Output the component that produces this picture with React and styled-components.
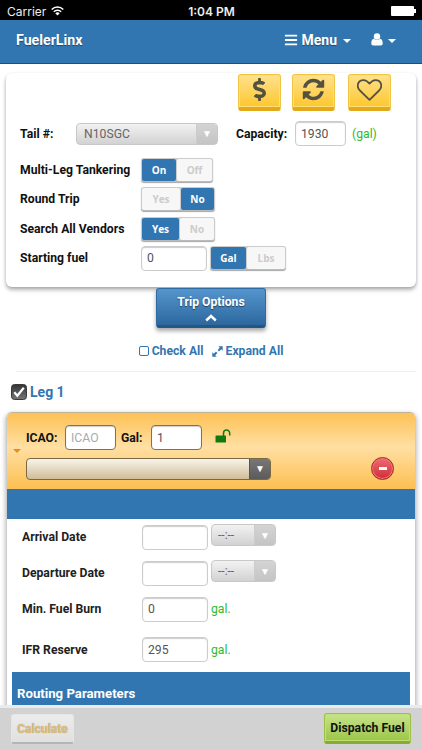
import styled, { createGlobalStyle, css } from "styled-components"
import { FaBars, FaDollarSign } from "react-icons/fa"

const App = () => {
  return (
    <Page>
      <GlobalStyle />
      <StatusBar>
        <Carrier>
          Carrier
          <WifiIcon />
        </Carrier>
        <Clock>1:04 PM</Clock>
        <Battery />
      </StatusBar>

      <NavBar>
        <Brand>FuelerLinx</Brand>
        <NavLinks>
          <MenuLink><FaBars size={14} />Menu<Caret /></MenuLink>
          <UserLink><UserIcon /><Caret /></UserLink>
        </NavLinks>
      </NavBar>

      <Content>
        <TripPanel>
          <ActionButtons>
            <YellowButton><FaDollarSign size={23} /></YellowButton>
            <YellowButton><RefreshIcon /></YellowButton>
            <YellowButton $last><HeartIcon /></YellowButton>
          </ActionButtons>

          <TailRow>
            <TailLabel>Tail #:</TailLabel>
            <Select $width={142} $height={22}>
              <SelectText>N10SGC</SelectText>
              <SelectArrow>▼</SelectArrow>
            </Select>
            <CapacityLabel>Capacity:</CapacityLabel>
            <Input $width={51} defaultValue="1930" />
            <Unit $gap={6}>(gal)</Unit>
          </TailRow>

          <OptionRow>
            <OptionLabel>Multi-Leg Tankering</OptionLabel>
            <Toggle>
              <ToggleItem $width={34} $active>On</ToggleItem>
              <ToggleItem $width={35}>Off</ToggleItem>
            </Toggle>
          </OptionRow>
          <OptionRow>
            <OptionLabel>Round Trip</OptionLabel>
            <Toggle>
              <ToggleItem $width={38}>Yes</ToggleItem>
              <ToggleItem $width={33} $active>No</ToggleItem>
            </Toggle>
          </OptionRow>
          <OptionRow>
            <OptionLabel>Search All Vendors</OptionLabel>
            <Toggle>
              <ToggleItem $width={37} $active>Yes</ToggleItem>
              <ToggleItem $width={34}>No</ToggleItem>
            </Toggle>
          </OptionRow>
          <OptionRow>
            <OptionLabel>Starting fuel</OptionLabel>
            <Input $width={66} defaultValue="0" />
            <Toggle $gap={3}>
              <ToggleItem $width={35} $active>Gal</ToggleItem>
              <ToggleItem $width={38}>Lbs</ToggleItem>
            </Toggle>
          </OptionRow>
        </TripPanel>

        <TripOptions>
          Trip Options
          <ChevronUp />
        </TripOptions>

        <Links>
          <LinkItem><EmptyBox />Check All</LinkItem>
          <LinkItem><ExpandIcon />Expand All</LinkItem>
        </Links>
        <Divider />

        <LegTitle>
          <CheckedBox />
          Leg 1
        </LegTitle>

        <LegPanel>
          <LegHeader>
            <LegCaret />
            <LegFields>
              <IcaoRow>
                <IcaoLabel>ICAO:</IcaoLabel>
                <Input $width={51} $dark placeholder="ICAO" />
                <GalLabel>Gal:</GalLabel>
                <Input $width={51} $dark defaultValue="1" />
                <UnlockIcon />
              </IcaoRow>
              <VendorRow>
                <VendorSelect>
                  <VendorArrow>▼</VendorArrow>
                </VendorSelect>
                <RemoveButton><Minus /></RemoveButton>
              </VendorRow>
            </LegFields>
          </LegHeader>
          <BlueBar />

          <LegRow $height={36}>
            <LegLabel>Arrival Date</LegLabel>
            <Input $width={66} />
            <TimeSelect />
          </LegRow>
          <LegRow $height={36}>
            <LegLabel>Departure Date</LegLabel>
            <Input $width={66} />
            <TimeSelect />
          </LegRow>
          <LegRow $height={36}>
            <LegLabel>Min. Fuel Burn</LegLabel>
            <Input $width={66} defaultValue="0" />
            <Unit $gap={3}>gal.</Unit>
          </LegRow>
          <LegRow $height={45}>
            <LegLabel>IFR Reserve</LegLabel>
            <Input $width={66} defaultValue="295" />
            <Unit $gap={3}>gal.</Unit>
          </LegRow>
          <RoutingBar>Routing Parameters</RoutingBar>
        </LegPanel>
      </Content>

      <Footer>
        <CalculateButton>Calculate</CalculateButton>
        <DispatchButton>Dispatch Fuel</DispatchButton>
      </Footer>
    </Page>
  )
}

export default App

const TimeSelect = () => (
  <TimeBox $width={65} $height={22}>
    <TimeText>--:--</TimeText>
    <SelectArrow>▼</SelectArrow>
  </TimeBox>
)

const WifiIcon = () => (
  <svg width="13" height="10" viewBox="0 0 13 10" fill="none" stroke="#fff" strokeWidth="1.5">
    <path d="M0.7 3.5a8.2 8.2 0 0 1 11.6 0" />
    <path d="M2.8 5.7a5.2 5.2 0 0 1 7.4 0" />
    <path d="M6.5 9.6L4.3 7.3a3.1 3.1 0 0 1 4.400 0z" fill="#fff" stroke="none" />
  </svg>
)

const UserIcon = () => (
  <svg width="12" height="13" viewBox="0 0 12 13" fill="currentColor">
    <circle cx="6" cy="3.500" r="3.200" />
    <path d="M3 5.800C1 6.200 0.300 8 0.300 10.300c0 1.400 0.800 2.200 2.100 2.200h7.200c1.300 0 2.100-0.800 2.100-2.200C11.700 8 11 6.200 9 5.800 7.500 7.500 4.500 7.500 3 5.800z" />
  </svg>
)

const RefreshIcon = () => (
  <svg width="25" height="25" viewBox="-128 0 1792 1792" fill="currentColor">
    <path d="M1511 1056q0 5-1 7-64 268-268 434.500t-478 166.500q-146 0-282.500-55t-243.500-157l-129 129q-19 19-45 19t-45-19-19-45v-448q0-26 19-45t45-19h448q26 0 45 19t19 45-19 45l-137 137q71 66 161 102t187 36q134 0 250-65t186-179q11-17 53-117 8-23 30-23h192q13 0 22.500 9.500t9.500 22.500zm25-800v448q0 26-19 45t-45 19h-448q-26 0-45-19t-19-45 19-45l138-138q-148-137-349-137-134 0-250 65t-186 179q-11 17-53 117-8 23-30 23h-199q-13 0-22.500-9.500t-9.500-22.500v-7q65-268 270-434.500t480-166.500q146 0 284 55.500t245 156.500l130-129q19-19 45-19t45 19 19 45z" />
  </svg>
)

const HeartIcon = () => (
  <svg width="25" height="22" viewBox="0 0 25 22" fill="none" stroke="currentColor" strokeWidth="1.8" strokeLinejoin="round">
    <path d="M12.500 20.800L2.900 11.500C-1.200 7 1 1.100 6.500 1.100c2.700 0 4.500 1.700 6 3.500 1.500-1.800 3.300-3.500 6-3.500 5.500 0 7.700 5.900 3.600 10.400z" />
  </svg>
)

const ChevronUp = () => (
  <svg width="12" height="8" viewBox="0 0 12 8" fill="none" stroke="#fff" strokeWidth="2.400">
    <path d="M1.200 6.500L6 2l4.800 4.500" />
  </svg>
)

const EmptyBox = () => (
  <svg width="10" height="10" viewBox="0 0 10 10" fill="none" stroke="currentColor">
    <rect x="0.500" y="0.500" width="9" height="9" rx="1.500" />
  </svg>
)

const ExpandIcon = () => (
  <svg width="11" height="11" viewBox="0 0 11 11" fill="currentColor">
    <path d="M6.300 0.300H10.700V4.700L9.200 3.200L7 5.400L5.600 4L7.800 1.800zM4.700 10.700H0.300V6.300L1.800 7.800L4 5.600L5.400 7L3.200 9.200z" />
  </svg>
)

const CheckedBox = () => (
  <svg width="16" height="16" viewBox="0 0 16 16">
    <defs>
      <linearGradient id="box" x1="0" y1="0" x2="0" y2="1">
        <stop offset="0" stopColor="#333" />
        <stop offset="1" stopColor="#777" />
      </linearGradient>
    </defs>
    <rect x="0.500" y="0.500" width="15" height="15" rx="3" fill="url(#box)" stroke="#3a3a3a" />
    <path d="M3.300 8.300L6.300 11.700L12.800 3.700" fill="none" stroke="#fff" strokeWidth="2.200" />
  </svg>
)

const UnlockIcon = () => (
  <Unlock width="16" height="14" viewBox="0 0 16 14">
    <rect x="0.500" y="6.500" width="10.500" height="7" rx="0.600" fill="#107a10" />
    <path d="M8.500 7V4.200a3.100 3.100 0 0 1 6.200 0V6.600" fill="none" stroke="#107a10" strokeWidth="1.500" />
  </Unlock>
)

const GlobalStyle = createGlobalStyle`
  * { box-sizing: border-box; }
  body { margin: 0; background: #fff; }
  input, button { font-family: Roboto, sans-serif; }
`

const Page = styled.div`
  display: flex;
  flex-direction: column;
  width: 422px;
  height: 750px;
  overflow: hidden;
  font: 700 12.200px Roboto, sans-serif;
  color: #111;
`

const StatusBar = styled.div`
  display: grid;
  grid-template-columns: 1fr auto 1fr;
  align-items: center;
  flex: none;
  height: 20px;
  padding: 2px 6px 0 7px;
  background: #000;
  color: #eee;
`
const Carrier = styled.div`
  display: flex;
  align-items: center;
  gap: 5px;
  font: 400 12px Inter, sans-serif;
`
const Clock = styled.div`
  font: 600 12px Inter, sans-serif;
`
const Battery = styled.div`
  position: relative;
  justify-self: end;
  width: 23px;
  height: 10px;
  margin-right: 2px;
  border-radius: 1px;
  background: #fff;

  &::after {
    content: "";
    position: absolute;
    right: -2px;
    top: 3px;
    width: 2px;
    height: 4px;
    background: #fff;
  }
`

const NavBar = styled.div`
  display: flex;
  justify-content: space-between;
  align-items: center;
  flex: none;
  height: 44px;
  padding: 0 26px 4px 16px;
  background: #3276b1;
  border-bottom: 1px solid #204d74;
  color: #fff;
  text-shadow: 0 1px 1px rgba(0, 0, 0, 0.4);
`
const Brand = styled.div`
  font-size: 14.200px;
`
const NavLinks = styled.div`
  display: flex;
  align-items: center;
  gap: 20px;
`
const MenuLink = styled.div`
  display: flex;
  align-items: center;
  gap: 3px;
  font-size: 14px;
`
const UserLink = styled(MenuLink)`
  gap: 2px;
`
const Caret = styled.span`
  margin: 3px 0 0 3px;
  border: 4px solid transparent;
  border-top-color: #fff;
  border-bottom: 0;
`

const Content = styled.div`
  flex: 1;
  min-height: 0;
  overflow: hidden;
  padding: 9px 6px 0;
`

const TripPanel = styled.div`
  height: 214px;
  padding: 1px 0 0 14px;
  border-radius: 6px;
  box-shadow: 0 3px 4px rgba(0, 0, 0, 0.28), 0 1px 3px rgba(0, 0, 0, 0.12);
`
const ActionButtons = styled.div`
  display: flex;
  justify-content: flex-end;
  gap: 11px;
  height: 37px;
  margin: 0 25px 1px 0;
`
const YellowButton = styled.button`
  display: flex;
  justify-content: center;
  align-items: center;
  width: 43px;
  height: 37px;
  margin-left: ${(props) => (props.$last ? "2px" : 0)};
  padding: 0 0 3px;
  border: 1px solid #f0c440;
  border-bottom: 4px solid #e3a91b;
  border-radius: 3px;
  background: linear-gradient(#ffe18e, #fdc72e);
  box-shadow: inset 0 0 0 1px #ffdf79;
  color: #55513f;
`

const Row = styled.div`
  display: flex;
  align-items: center;
`
const TailRow = styled(Row)`
  height: 43px;
`
const OptionRow = styled(Row)`
  height: 29.500px;
`
const TailLabel = styled.div`
  width: 56px;
`
const CapacityLabel = styled.div`
  width: 77px;
  padding-left: 18px;
  white-space: nowrap;
`
const OptionLabel = styled.div`
  width: 121px;
  white-space: nowrap;
`

const Input = styled.input`
  width: ${(props) => props.$width}px;
  height: 25px;
  padding: 0 5px;
  border: 1px solid ${(props) => (props.$dark ? "#85714f" : "#ccc")};
  border-radius: 4px;
  outline: 0;
  background: #fff;
  box-shadow: inset 0 1px 1px rgba(0, 0, 0, 0.2);
  color: #555;
  font-size: 12.200px;

  &::placeholder {
    color: #aaa;
  }
`
const Unit = styled.div`
  margin-left: ${(props) => props.$gap}px;
  color: #2fba2f;
  font-weight: 400;
  font-size: 12.200px;
`

const Select = styled.div`
  display: flex;
  align-items: stretch;
  width: ${(props) => props.$width}px;
  height: ${(props) => props.$height}px;
  border: 1px solid #c8c8c8;
  border-radius: 4px;
  overflow: hidden;
  background: linear-gradient(#f2f2f2, #d2d2d2);
  color: #666;
  font-weight: 400;
`
const SelectText = styled.div`
  display: flex;
  align-items: center;
  flex: 1;
  padding-left: 7px;
  font-size: 12.200px;
`
const SelectArrow = styled.div`
  display: flex;
  justify-content: center;
  align-items: center;
  width: 21px;
  border-left: 1px solid #ccc;
  background: linear-gradient(#d4d4d4, #c4c4c4);
  color: #fff;
  font-size: 10px;
`
const TimeBox = styled(Select)`
  margin: 0 0 4px 3px;
`
const TimeText = styled(SelectText)`
  padding-left: 6px;
  font-size: 12px;
`

const Toggle = styled.div`
  display: flex;
  gap: 1px;
  height: 24px;
  margin-left: ${(props) => props.$gap || 0}px;
  border: 1px solid #ccc;
  border-bottom-color: #bbb;
  border-radius: 3px;
  background: #ccc;
  box-shadow: 0 1px 1px rgba(0, 0, 0, 0.35);
`
const ToggleItem = styled.div`
  display: flex;
  justify-content: center;
  align-items: center;
  width: ${(props) => props.$width}px;
  border-radius: 2px;
  background: #f7f7f7;
  color: #ccc;
  font: 700 10px "Open Sans", sans-serif;

  ${(props) => props.$active && css`
    background: #3276b1;
    color: #fff;
  `}
`

const TripOptions = styled.div`
  position: relative;
  display: flex;
  flex-direction: column;
  align-items: center;
  gap: 5px;
  width: 110px;
  height: 40px;
  margin: 1px auto 0;
  padding-top: 7px;
  border: 1px solid #2d6ca2;
  border-bottom: 3px solid #245682;
  border-radius: 3px;
  background: linear-gradient(#5594cd, #2c689e);
  box-shadow: 0 3px 4px rgba(0, 0, 0, 0.35);
  color: #fff;
  line-height: 13px;
  text-shadow: 0 1px 1px rgba(0, 0, 0, 0.5);
`
const Links = styled.div`
  display: flex;
  justify-content: center;
  gap: 8px;
  height: 43px;
  padding-top: 3px;
  color: #3276b1;
`
const LinkItem = styled(Row)`
  gap: 3px;
`
const Divider = styled.div`
  height: 1px;
  margin: 0 0 0 10px;
  background: #eee;
`
const LegTitle = styled(Row)`
  gap: 3px;
  height: 40px;
  padding-left: 5px;
  color: #3276b1;
  font-size: 14px;
`

const LegPanel = styled.div`
  height: 400px;
  border: 1px solid #c9b48d;
  border-color: #c0b49c #ccc;
  border-radius: 6px 6px 0 0;
  overflow: hidden;
  box-shadow: 0 2px 4px 1px rgba(0, 0, 0, 0.25);
`
const LegHeader = styled.div`
  display: flex;
  height: 76px;
  background: linear-gradient(#fdc155, #ffdfa3 45%, #fdbf50);
`
const LegCaret = styled.div`
  width: 8px;
  height: 4px;
  margin: 36px 4px 0 6px;
  border: 4px solid transparent;
  border-top-color: #f08c14;
  border-bottom: 0;
`
const LegFields = styled.div`
  flex: 1;
  padding-left: 1px;
`
const IcaoRow = styled(Row)`
  height: 49px;
`
const IcaoLabel = styled.div`
  width: 39px;
`
const GalLabel = styled.div`
  width: 35px;
  padding-left: 5px;
`
const Unlock = styled.svg`
  margin: 0 0 3px 13px;
`
const VendorRow = styled(Row)`
  height: 13px;
`
const VendorSelect = styled.div`
  display: flex;
  justify-content: flex-end;
  flex: none;
  width: 245px;
  height: 22px;
  border: 1px solid #7b6844;
  border-radius: 4px;
  overflow: hidden;
  background: linear-gradient(#faf4e9, #d0bd98);
`
const VendorArrow = styled(SelectArrow)`
  border-color: #555;
  background: linear-gradient(#777, #5b5b5b);
`
const RemoveButton = styled.div`
  display: flex;
  justify-content: center;
  align-items: center;
  flex: none;
  width: 23px;
  height: 23px;
  margin-left: 100px;
  border: 1px solid #b3202a;
  border-radius: 50%;
  background: linear-gradient(#ed6b70, #cf2f37);
  box-shadow: inset 0 0 0 1px #ee7a7e;
`
const Minus = styled.div`
  width: 8px;
  height: 3px;
  background: #fff;
`
const BlueBar = styled.div`
  height: 30px;
  background: #3276b1;
`
const LegRow = styled(Row)`
  height: ${(props) => props.$height}px;
  padding-left: 15px;
`
const LegLabel = styled.div`
  width: 120px;
  color: #222;
`
const RoutingBar = styled.div`
  height: 80px;
  margin: 0 5px;
  padding: 14px 5px 0;
  background: #3276b1;
  color: #fff;
  font-size: 13.200px;
`

const Footer = styled.div`
  position: relative;
  display: flex;
  justify-content: space-between;
  align-items: flex-start;
  flex: none;
  height: 45px;
  padding: 5px 11px 0;
  border-top: 3px solid #e8ecef;
  background: #d2d2d2;
`
const CalculateButton = styled.button`
  width: 63px;
  height: 30px;
  margin-top: 1px;
  padding: 0;
  border: 1px solid #e6e6e6;
  border-bottom: 2px solid #b5b5b5;
  border-radius: 3px;
  background: linear-gradient(#ececec, #e0e0e0);
  color: #e0be74;
  font-size: 12px;
  font-weight: 700;
  text-shadow: 0 0 1px #999;
`
const DispatchButton = styled.button`
  width: 87px;
  height: 31px;
  padding: 0;
  border: 1px solid #9dc145;
  border-bottom: 3px solid #86ab30;
  border-radius: 3px;
  background: linear-gradient(#c7e38b, #9cc548);
  box-shadow: inset 0 0 0 1px #bfe075;
  color: #111;
  font-size: 12.200px;
  font-weight: 700;
`
